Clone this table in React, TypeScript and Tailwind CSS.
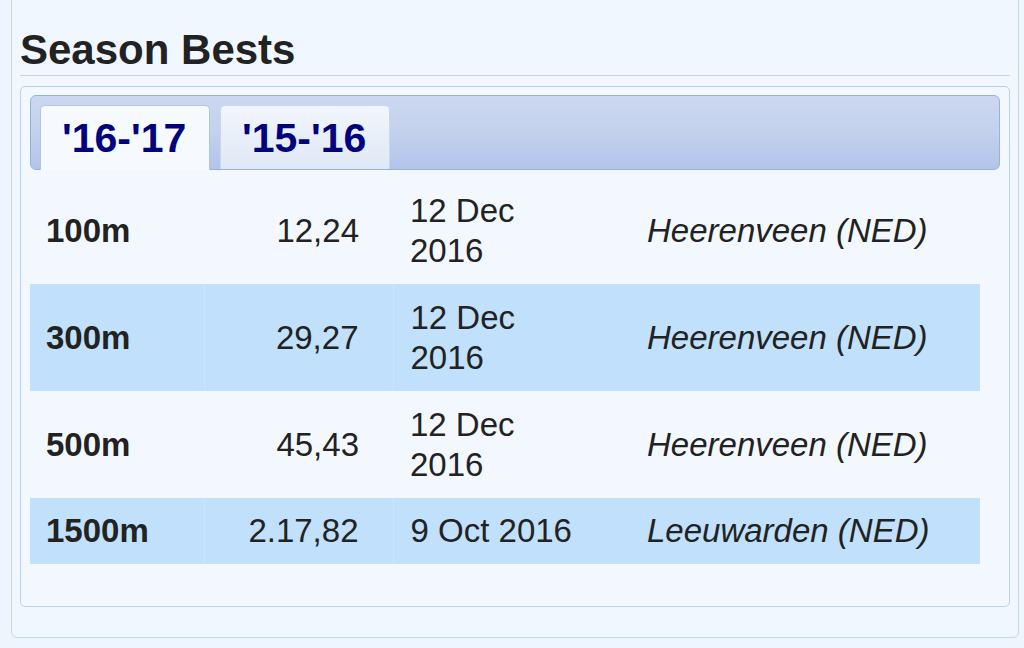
type Row = { dist: string; time: string; date: string; place: string; hl: boolean; tall: boolean };

const rows: Row[] = [
  { dist: '100m', time: '12,24', date: '12 Dec 2016', place: 'Heerenveen (NED)', hl: false, tall: true },
  { dist: '300m', time: '29,27', date: '12 Dec 2016', place: 'Heerenveen (NED)', hl: true, tall: true },
  { dist: '500m', time: '45,43', date: '12 Dec 2016', place: 'Heerenveen (NED)', hl: false, tall: true },
  { dist: '1500m', time: '2.17,82', date: '9 Oct 2016', place: 'Leeuwarden (NED)', hl: true, tall: false },
];

export default function App() {
  return (
    <div className="min-h-[648px] bg-[#edf5fd] pl-[11px] pr-[5px] pb-[11px] overflow-hidden text-[#222] font-['Liberation_Sans',Arial,sans-serif]">
      <div className="-mt-[10px] border border-[#c4d8ec] rounded-[6px] bg-[#f0f7fe] px-[8px] pt-[38px] pb-[30px]">
        <h1 className="text-[42px] leading-[42px] font-bold text-[#222] pb-[4px] border-b border-[#cfd3d9]">
          Season Bests
        </h1>

        <div className="mt-[10px] border border-[#b9d3ea] rounded-[5px] bg-[#f3f8fe] px-[9px] pt-[8px] pb-[42px]">
          {/* tab strip */}
          <div className="h-[75px] border border-[#92b3e2] rounded-[6px] bg-gradient-to-b from-[#ccd8f0] via-[#c3d1ee] to-[#b2c4ea] flex items-end gap-[10px] px-[9px]">
            <div className="relative -mb-px w-[170px] h-[65px] rounded-t-[5px] border border-b-0 border-[#b0c6e6] bg-[#f6f9fe] pl-[21px] pt-[12px]">
              <span className="text-[41px] leading-[41px] font-bold text-[#02027f]">'16-'17</span>
            </div>
            <div className="w-[170px] h-[64px] rounded-t-[5px] border border-b-0 border-[#c8d6ee] bg-gradient-to-b from-[#f2f5fc] to-[#dfe8f6] pl-[21px] pt-[12px]">
              <span className="text-[41px] leading-[41px] font-bold text-[#02027f]">'15-'16</span>
            </div>
          </div>

          <table className="mt-[7px] w-[950px] table-fixed border-collapse text-[33px] leading-[40px]">
            <colgroup>
              <col className="w-[174px]" />
              <col className="w-[189px]" />
              <col className="w-[237px]" />
              <col className="w-[350px]" />
            </colgroup>
            <tbody>
              {rows.map(r => (
                <tr key={r.dist} className={`${r.tall ? 'h-[107px]' : 'h-[66px]'} ${r.hl ? 'bg-[#c0e0fb]' : ''}`}>
                  <td className="pl-[16px] font-bold align-middle">{r.dist}</td>
                  <td className={`pr-[34px] text-right align-middle ${r.hl ? 'border-l border-[#cbe5fb]' : ''}`}>{r.time}</td>
                  <td className={`pl-[17px] align-middle ${r.hl ? 'border-l border-[#cbe5fb]' : ''}`}>
                    <div className="w-[178px]">{r.date}</div>
                  </td>
                  <td className="pl-[17px] italic align-middle">{r.place}</td>
                </tr>
              ))}
            </tbody>
          </table>
        </div>
      </div>
    </div>
  );
}
